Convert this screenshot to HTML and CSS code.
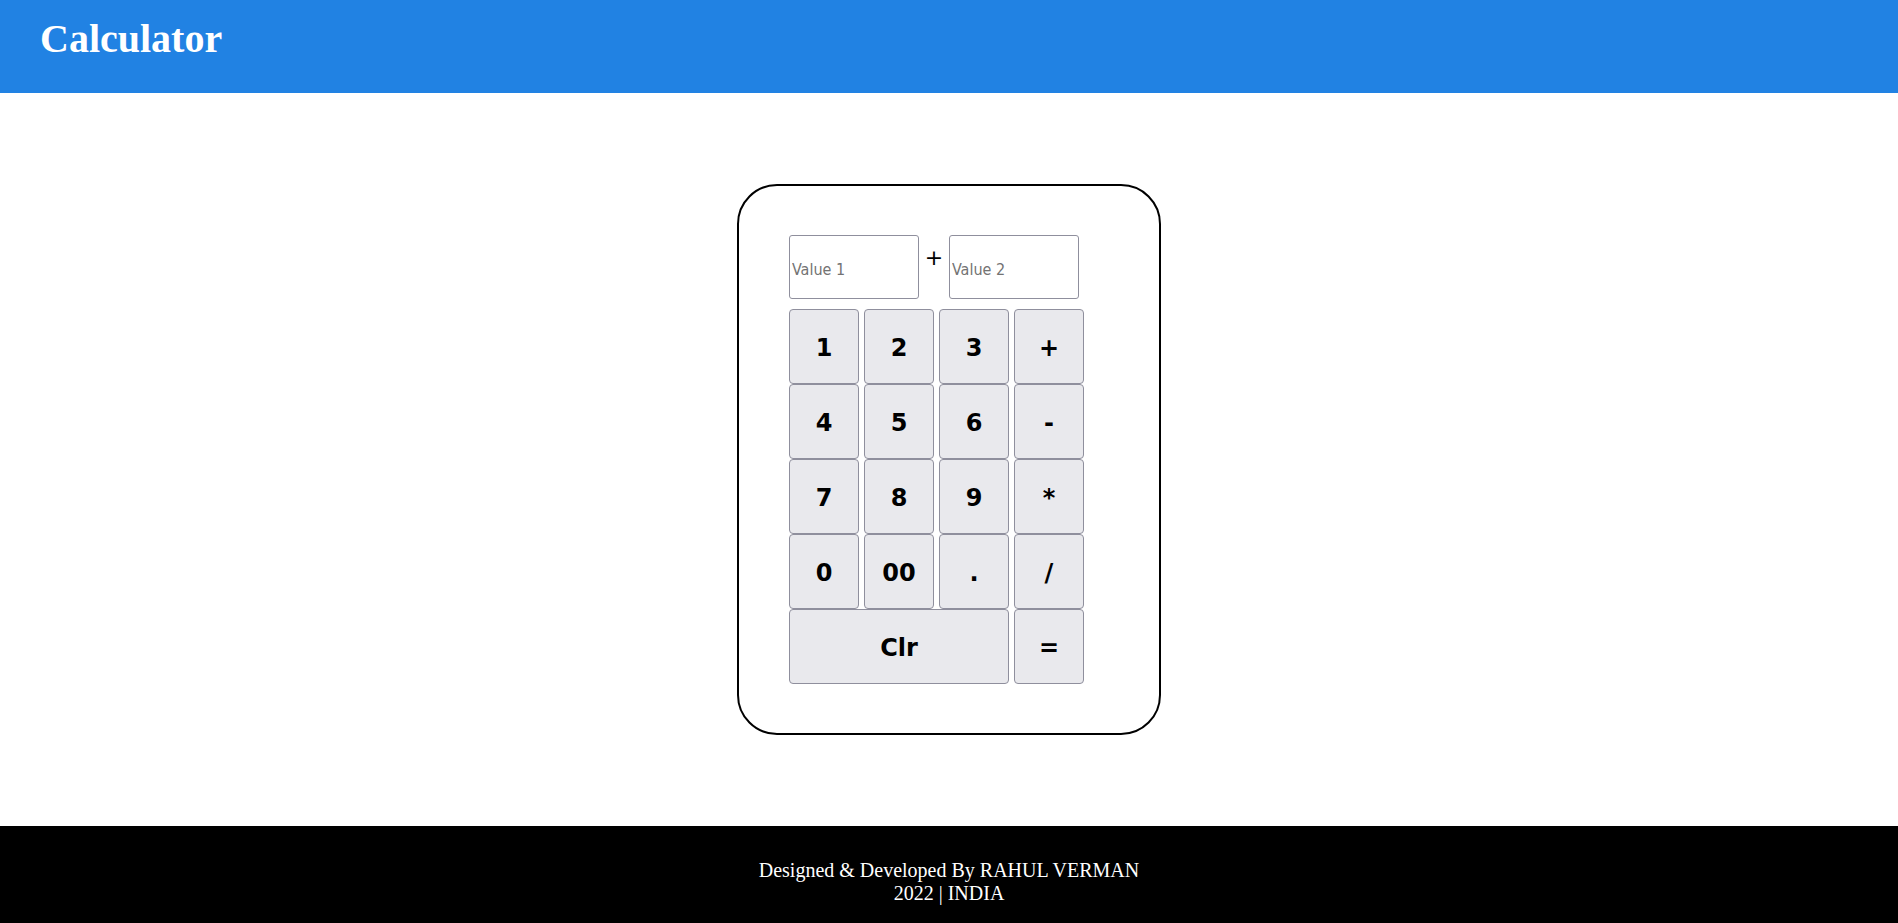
FILE: index.html
```html
<!DOCTYPE html>
<html>
<head>
<meta charset="utf-8">
<title>Calculator</title>
<link rel="stylesheet" href="styles.css">
</head>
<body>
<header class="topbar">
  <h1 class="title">Calculator</h1>
</header>
<main class="main">
  <div class="calc">
    <div class="inputs">
      <input class="field" type="text" placeholder="Value 1">
      <span class="op">+</span>
      <input class="field" type="text" placeholder="Value 2">
    </div>
    <div class="keys">
      <button class="key">1</button>
      <button class="key">2</button>
      <button class="key">3</button>
      <button class="key">+</button>
      <button class="key">4</button>
      <button class="key">5</button>
      <button class="key">6</button>
      <button class="key">-</button>
      <button class="key">7</button>
      <button class="key">8</button>
      <button class="key">9</button>
      <button class="key">*</button>
      <button class="key">0</button>
      <button class="key">00</button>
      <button class="key">.</button>
      <button class="key">/</button>
      <button class="key key-wide">Clr</button>
      <button class="key">=</button>
    </div>
  </div>
</main>
<footer class="footer">
  <div class="credit">Designed &amp; Developed By RAHUL VERMAN</div>
  <div class="credit">2022 | INDIA</div>
</footer>
</body>
</html>
```

FILE: styles.css
```css
html, body {
  margin: 0;
  padding: 0;
}
body {
  font-family: "Liberation Serif", "Times New Roman", serif;
  background: #ffffff;
  overflow: hidden;
}
.topbar {
  background: #2182e3;
  height: 93px;
  box-sizing: border-box;
  padding: 16px 0 0 40px;
}
.title {
  margin: 0;
  color: #ffffff;
  font-family: "Liberation Serif", "Times New Roman", serif;
  font-weight: bold;
  font-size: 40px;
  line-height: 46px;
}
.main {
  height: 733px;
  box-sizing: border-box;
  padding-top: 91px;
  display: flex;
  justify-content: center;
  align-items: flex-start;
}
.calc {
  width: 320px;
  padding: 49px 50px;
  border: 2px solid #000000;
  border-radius: 40px;
  display: flex;
  flex-direction: column;
  gap: 10px;
}
.inputs {
  display: flex;
  align-items: flex-start;
}
.field {
  width: 130px;
  height: 64px;
  box-sizing: border-box;
  margin: 0;
  border: 1px solid #8f8f9d;
  border-radius: 3px;
  padding: 4px 2px 0 2px;
  font-family: "DejaVu Sans Condensed", "DejaVu Sans", sans-serif;
  font-size: 16px;
  color: #000;
  background: #fff;
}
.field::placeholder {
  color: #737373;
}
.op {
  width: 30px;
  text-align: center;
  font-family: "DejaVu Sans", sans-serif;
  font-size: 22px;
  line-height: 22px;
  margin-top: 12px;
  color: #000;
}
.keys {
  display: grid;
  grid-template-columns: repeat(4, 70px);
  grid-auto-rows: 75px;
  column-gap: 5px;
  row-gap: 0;
}
.key {
  margin: 0;
  padding: 2px 0 0 0;
  box-sizing: border-box;
  background: #e9e9ed;
  border: 1px solid #8f8f9d;
  border-radius: 4px;
  font-family: "DejaVu Sans", Verdana, sans-serif;
  font-weight: bold;
  font-size: 24px;
  color: #000;
}
.key-wide {
  grid-column: span 3;
}
.footer {
  background: #000000;
  color: #ffffff;
  height: 97px;
  box-sizing: border-box;
  padding-top: 33px;
  text-align: center;
  font-family: "Liberation Serif", "Times New Roman", serif;
  font-size: 20px;
  line-height: 23px;
}
.credit {
  color: #ffffff;
}
```
